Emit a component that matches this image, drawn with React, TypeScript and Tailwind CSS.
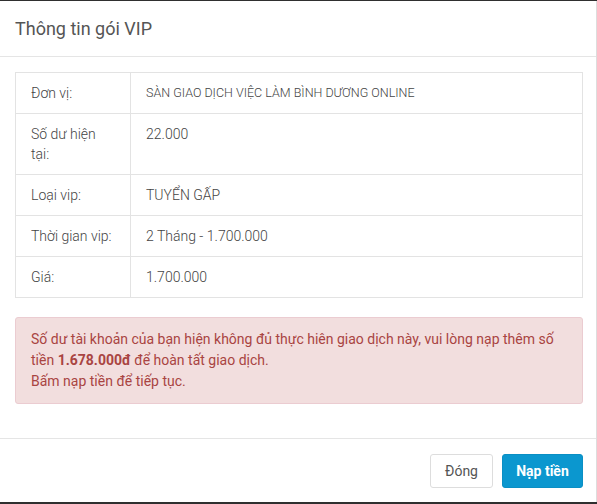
import React from 'react';

type Row = { label: string; value: string; small?: boolean };

const rows: Row[] = [
  { label: 'Đơn vị:', value: 'SÀN GIAO DỊCH VIỆC LÀM BÌNH DƯƠNG ONLINE', small: true },
  { label: 'Số dư hiện tại:', value: '22.000' },
  { label: 'Loại vip:', value: 'TUYỂN GẤP' },
  { label: 'Thời gian vip:', value: '2 Tháng - 1.700.000' },
  { label: 'Giá:', value: '1.700.000' },
];

export default function App() {
  return (
    <div className="h-[504px] w-[597px] bg-[#2f2f2f] pt-[1px] font-['Roboto',sans-serif]">
      <div className="flex h-[501px] flex-col border-r border-[#ddd] bg-white">
        <div className="flex h-[56px] items-center border-b border-[#e5e5e5] px-[15px]">
          <h4 className="text-[18px] leading-[20px] text-[#555]">Thông tin gói VIP</h4>
        </div>

        <div className="flex-1 pl-[15px] pr-[13px] pt-[15px]">
          <table className="w-full border-collapse border border-[#e3e3e3] text-[14px] font-light text-[#444]">
            <tbody>
              {rows.map((row) => (
                <tr key={row.label} className="border-t border-[#e3e3e3]">
                  <td className="w-[115px] border-r border-[#e3e3e3] px-[15px] py-[10px] align-top leading-[20px]">
                    {row.label}
                  </td>
                  <td
                    className={
                      row.small
                        ? 'px-[15px] py-[10px] align-top text-[12.5px] leading-[20px]'
                        : 'px-[15px] py-[10px] align-top leading-[20px]'
                    }
                  >
                    {row.value}
                  </td>
                </tr>
              ))}
            </tbody>
          </table>

          <div className="mt-[19px] rounded-[3px] border border-[#ebccd1] bg-[#f2dede] px-[15px] py-[11px] text-[14px] leading-[21px] text-[#a94442]">
            Số dư tài khoản của bạn hiện không đủ thực hiên giao dịch này, vui lòng nạp thêm số tiền{' '}
            <b className="font-bold">1.678.000đ</b> để hoàn tất giao dịch.
            <br />
            Bấm nạp tiền để tiếp tục.
          </div>
        </div>

        <div className="flex h-[64px] items-start justify-end gap-[9px] border-t border-[#e5e5e5] pl-[15px] pr-[13px] pt-[15px]">
          <button className="h-[34px] w-[63px] rounded-[3px] border border-[#ddd] bg-white text-[14px] text-[#555]">
            Đóng
          </button>
          <button className="h-[34px] w-[81px] rounded-[3px] border border-[#0a8fc4] bg-[#0b97cf] text-[14px] font-bold text-white">
            Nạp tiền
          </button>
        </div>
      </div>
    </div>
  );
}
